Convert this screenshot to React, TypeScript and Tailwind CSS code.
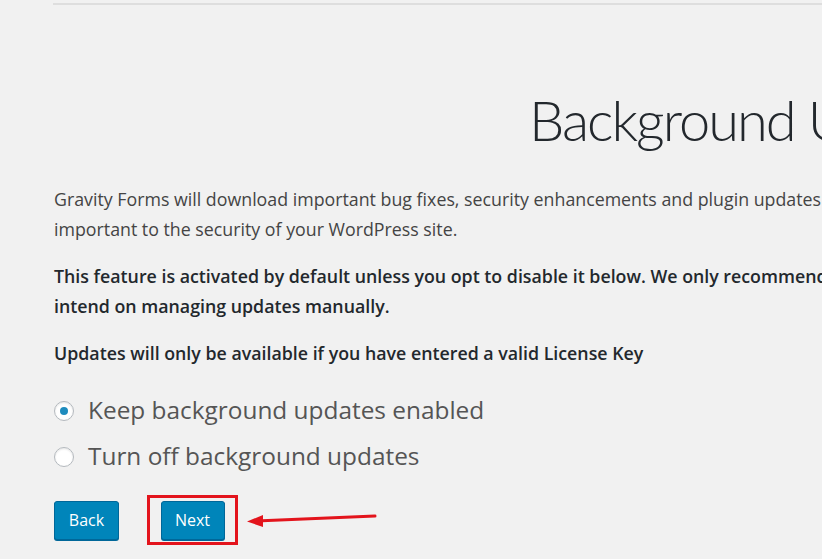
export default function App() {
  return (
    <div className="relative h-[559px] w-[822px] overflow-hidden bg-[#f1f1f1] font-['Open_Sans','Noto_Sans',sans-serif] text-[#444]">
      {/* top rule */}
      <div className="ml-[53px] mt-[3px] h-[2px] bg-[#dedede]" />

      <main className="pl-[54px]">
        <h1 className="mt-[79px] whitespace-nowrap pl-[475px] font-['Lato',sans-serif] text-[56px] font-light leading-[72px] tracking-[-2px] text-[#23282d]">
          Background Updates
        </h1>

        <div className="mt-[28px] space-y-[17px] whitespace-nowrap text-[17.8px] leading-[30px]">
          <p>
            Gravity Forms will download important bug fixes, security enhancements and plugin updates automatically. Updates are extremely
            <br />
            important to the security of your WordPress site.
          </p>
          <p className="font-semibold text-[#23282d]">
            This feature is activated by default unless you opt to disable it below. We only recommend disabling background updates if you
            <br />
            intend on managing updates manually.
          </p>
          <p className="font-semibold text-[#23282d]">Updates will only be available if you have entered a valid License Key</p>
        </div>

        <div className="mt-[27px] space-y-[15px] text-[24.4px] text-[#555]">
          <label className="flex h-[31px] items-center gap-[14px]">
            <span className="flex h-[20px] w-[20px] items-center justify-center rounded-full border border-[#b4b9be] bg-white shadow-[inset_0_1px_2px_rgba(0,0,0,0.1)]">
              <span className="h-[8px] w-[8px] rounded-full bg-[#1e8cbe]" />
            </span>
            Keep background updates enabled
          </label>
          <label className="flex h-[31px] items-center gap-[14px]">
            <span className="h-[20px] w-[20px] rounded-full border border-[#b4b9be] bg-white shadow-[inset_0_1px_2px_rgba(0,0,0,0.1)]" />
            Turn off background updates
          </label>
        </div>

        <div className="mt-[23px] flex items-center">
          <button className="h-[39px] w-[65px] rounded-[3px] border border-[#006799] bg-[#0085ba] text-[16px] text-white shadow-[0_1px_0_#006799]">
            Back
          </button>
          <div className="ml-[28px] flex h-[50px] w-[91px] items-center justify-center border-[3px] border-[#e3141c]">
            <button className="h-[39px] w-[64px] rounded-[3px] border border-[#006799] bg-[#0085ba] text-[16px] text-white shadow-[0_1px_0_#006799]">
              Next
            </button>
          </div>
          <svg className="ml-[8px]" width="132" height="16" viewBox="0 0 132 16">
            <path d="M10 9 L129 4" stroke="#e3141c" strokeWidth="3" strokeLinecap="round" />
            <path d="M1 9.5 L17 3 L17 15 Z" fill="#e3141c" />
          </svg>
        </div>
      </main>
    </div>
  )
}
